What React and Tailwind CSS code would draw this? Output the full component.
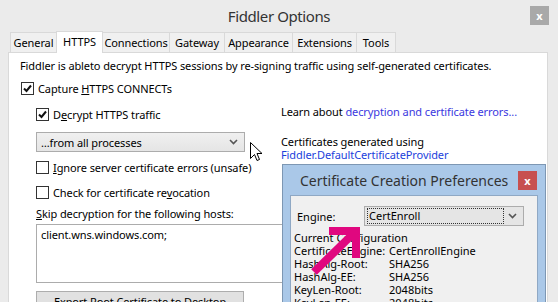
import React from 'react';

const tabs = [
    { label: 'General', w: 'w-[47px]' },
    { label: 'HTTPS', w: 'w-[47px]', active: true },
    { label: 'Connections', w: 'w-[68px]' },
    { label: 'Gateway', w: 'w-[56px]' },
    { label: 'Appearance', w: 'w-[69px]' },
    { label: 'Extensions', w: 'w-[65px]' },
    { label: 'Tools', w: 'w-[40px]' },
];

const config = [
    ['Current Configuration', ''],
    ['CertificateEngine:', 'CertEnrollEngine'],
    ['HashAlg-Root:', 'SHA256'],
    ['HashAlg-EE:', 'SHA256'],
    ['KeyLen-Root:', '2048bits'],
    ['KeyLen-EE:', '2048bits'],
];

const CheckBox = ({ checked }) => (
    <span className="w-[13px] h-[13px] border border-[#333333] bg-white flex items-center justify-center shrink-0">
        {checked && (
            <svg width="9" height="9" viewBox="0 0 9 9">
                <path d="M1 4.5 L3.5 7 L8 1.5" stroke="#111" strokeWidth="2" fill="none" />
            </svg>
        )}
    </span>
);

const Chevron = () => (
    <svg width="9" height="6" viewBox="0 0 9 6">
        <path d="M1 1 L4.5 4.5 L8 1" stroke="#555" strokeWidth="1.6" fill="none" />
    </svg>
);

const CheckRow = ({ checked, children, className = '' }) => (
    <div className={`flex items-center gap-[4px] h-[15px] ${className}`}>
        <CheckBox checked={checked} />
        <span>{children}</span>
    </div>
);

const App = () => {
    return (
        <div className="w-[558px] h-[302px] overflow-hidden relative bg-[#ebebeb] text-[11px] leading-[15px] tracking-[-0.1px] text-black font-['Noto_Sans',sans-serif]">
            {/* title bar */}
            <div className="h-[31px] flex items-center justify-center relative">
                <span className="text-[15px] tracking-[-0.4px] text-[#333] pt-[1px]">Fiddler Options</span>
                <div className="absolute left-[530px] top-[6px] w-[19px] h-[19px] bg-[#a9a9a9] flex items-center justify-center text-white text-[11px] font-bold leading-none">x</div>
            </div>

            {/* client */}
            <div className="ml-[8px]">
                <div className="flex items-end ml-[2px] h-[21px]">
                    {tabs.map((t) => (
                        <div
                            key={t.label}
                            className={`${t.w} flex justify-center items-center border border-[#d9d9d9] -ml-px first:ml-0 ${t.active ? 'h-[22px] bg-white border-b-0 relative z-10 mb-[-1px] pb-[2px]' : 'h-[20px] bg-[#f0f0f0] border-b-0'}`}
                        >
                            {t.label}
                        </div>
                    ))}
                </div>
                <div className="w-[540px] h-[260px] border border-[#d9d9d9] bg-white pl-[11px] pt-[5px]">
                    <div>Fiddler is ableto decrypt HTTPS sessions by re-signing traffic using self-generated certificates.</div>
                    <CheckRow checked className="mt-[8px] ml-px">
                        Capture <u>H</u>TTPS CONNECTs
                    </CheckRow>
                    <div className="flex">
                        <div className="w-[261px] pl-[16px]">
                            <CheckRow checked className="mt-[11px]">
                                D<u>e</u>crypt HTTPS traffic
                            </CheckRow>
                            <div className="mt-[10px] w-[209px] h-[20px] border border-[#acacac] bg-gradient-to-b from-[#f0f0f0] to-[#e5e5e5] flex items-center justify-between pl-[4px] pr-[6px]">
                                <span>…from all processes</span>
                                <Chevron />
                            </div>
                            <CheckRow className="mt-[8px]">
                                <u>I</u>gnore server certificate errors (unsafe)
                            </CheckRow>
                            <CheckRow className="mt-[10px]">
                                Check for certificate re<u>v</u>ocation
                            </CheckRow>
                            <div className="mt-[6px]"><u>S</u>kip decryption for the following hosts:</div>
                            <div className="mt-[3px] w-[260px] h-[59px] border border-[#acacac] bg-white px-[4px] pt-[2px]">
                                client.wns.windows.com;
                            </div>
                            <div className="mt-[8px] w-[208px] h-[22px] border border-[#adadad] bg-[#e1e1e1] flex justify-center pt-[2px]">
                                Export Root Certificate to Desktop
                            </div>
                        </div>
                        <div className="pt-[8px]">
                            <div>
                                Learn about <span className="text-[#3b38e0]">decryption and certificate errors...</span>
                            </div>
                            <div className="mt-[15px]">Certificates generated using</div>
                            <div className="text-[#1c3fdc] -mt-[2px]">Fiddler.DefaultCertificateProvider</div>
                        </div>
                    </div>
                </div>
            </div>

            {/* mouse cursor */}
            <svg className="absolute left-[250px] top-[142px]" width="13" height="21" viewBox="0 0 13 21">
                <path d="M0.5 0.5 L0.5 16.5 L4.5 12.5 L7 18.5 L9.5 17.5 L7 11.5 L12 11.5 Z" fill="white" stroke="black" strokeWidth="1" />
            </svg>

            {/* Certificate Creation Preferences dialog */}
            <div className="absolute left-[282px] top-[164px] w-[264px] h-[150px] bg-[#aac8e8] border border-[#7d97b3] tracking-normal">
                <div className="h-[30px] flex items-center pl-[17px] relative">
                    <span className="text-[14px] tracking-[0px] text-[#333]">Certificate Creation Preferences</span>
                    <div className="absolute left-[235px] top-[6px] w-[19px] h-[19px] bg-[#c75050] flex items-center justify-center text-white text-[11px] font-bold leading-none">x</div>
                </div>
                <div className="ml-[7px] w-[248px] h-[120px] bg-[#f0f0f0] border border-[#8fa8c4] pl-[3px] pt-[10px] text-[11px] leading-[13px]">
                    <div className="flex items-center">
                        <span className="w-[70px] pl-[3px]">Engine:</span>
                        <div className="w-[160px] h-[20px] border border-[#acacac] bg-[#e5e5e5] flex items-center justify-between pl-[2px] pr-[6px]">
                            <span className="border border-dotted border-[#333] w-[137px] h-[16px] px-[1px] leading-[14px]">CertEnroll</span>
                            <Chevron />
                        </div>
                    </div>
                    <div className="mt-[5px]">
                        {config.map(([k, v]) => (
                            <div key={k} className="flex">
                                <span className="w-[95px] whitespace-nowrap">{k}</span>
                                <span>{v}</span>
                            </div>
                        ))}
                    </div>
                </div>
            </div>

            {/* pink arrow */}
            <svg className="absolute left-[300px] top-[220px]" width="70" height="70" viewBox="0 0 70 70">
                <path d="M14 52 L56 11" stroke="#e0077f" strokeWidth="8" strokeLinecap="butt" />
                <path d="M29 11 L56 11 L56 38" stroke="#e0077f" strokeWidth="8" fill="none" strokeLinejoin="miter" />
            </svg>
        </div>
    );
};

export default App;
